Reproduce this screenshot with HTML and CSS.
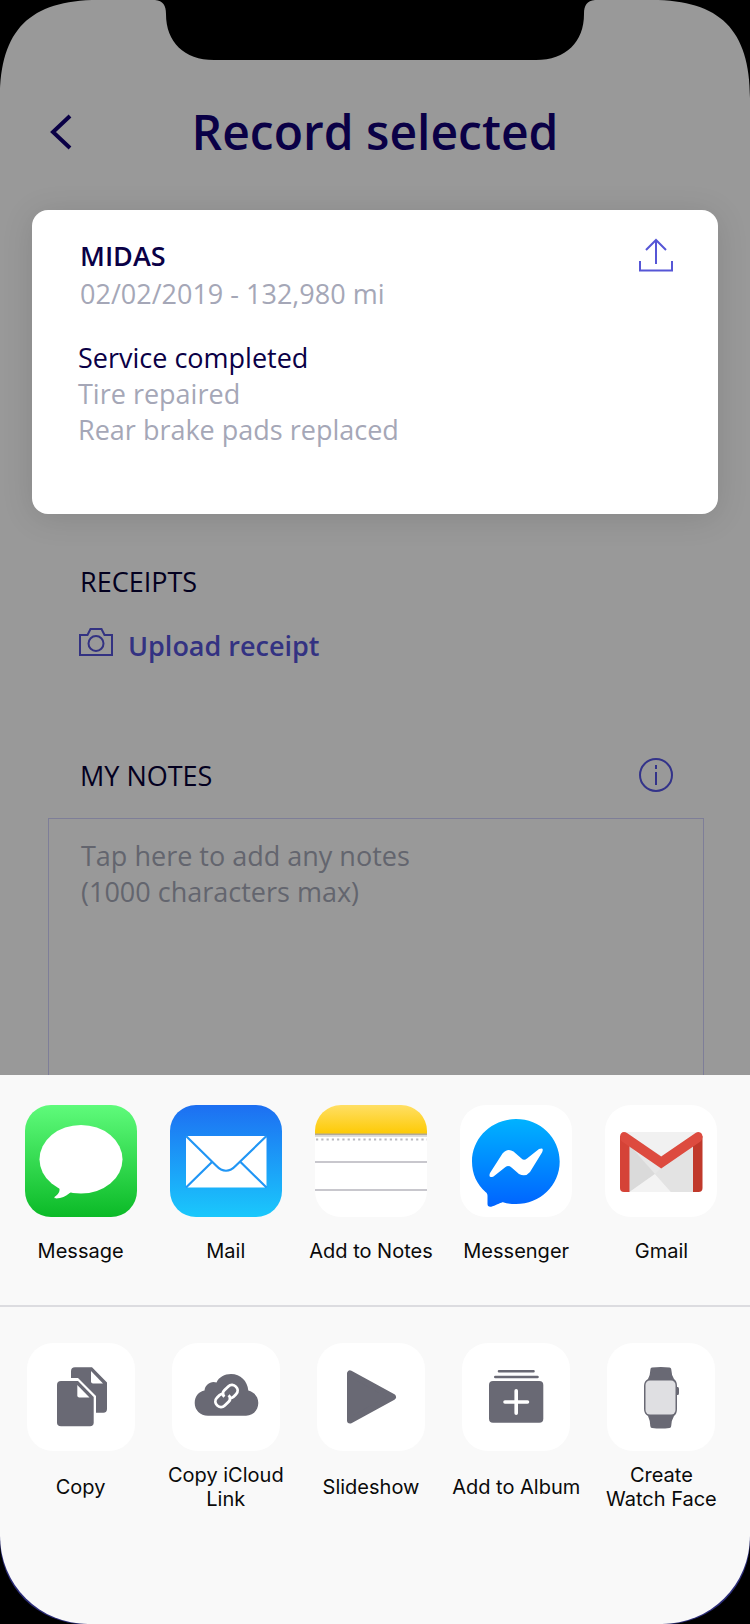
FILE: index.html
```html
<!DOCTYPE html>
<html lang="en">
<head>
<meta charset="utf-8">
<meta name="viewport" content="width=device-width, initial-scale=1">
<title>Record selected</title>
<link rel="stylesheet" href="styles.css">
</head>
<body>
<div class="screen">
  <svg class="corner corner-left" viewBox="0 0 98 98" aria-hidden="true"><path d="M0 0V98C0 30 30 0 98 0Z"/></svg>
  <svg class="corner corner-right" viewBox="0 0 98 98" aria-hidden="true"><path d="M98 0V98C98 30 68 0 0 0Z"/></svg>
  <svg class="notch" viewBox="0 0 440 60" aria-hidden="true"><path d="M0 0C8 1 11 5 11 14C11 42 29 60 59 60H381C411 60 429 42 429 14C429 5 432 1 440 0Z"/></svg>

  <header class="header">
    <button class="icon-button back" type="button" aria-label="Back">
      <svg width="22" height="36" viewBox="0 0 22 36"><path d="M20 2L3 18L20 34" fill="none" stroke="currentColor" stroke-width="4"/></svg>
    </button>
    <h1 class="title">Record selected</h1>
  </header>

  <main class="content">
    <section class="card">
      <div class="card-head">
        <h2 class="shop">MIDAS</h2>
        <button class="icon-button share" type="button" aria-label="Share record">
          <svg width="34" height="34" viewBox="0 0 34 34"><g fill="none" stroke="currentColor" stroke-width="2"><path d="M1 23V32.500H33V23"/><path d="M17 26V2M7 12L17 2L27 12"/></g></svg>
        </button>
      </div>
      <p class="muted date">02/02/2019 - 132,980 mi</p>
      <div class="service">
        <h3 class="service-title">Service completed</h3>
        <p class="muted">Tire repaired</p>
        <p class="muted">Rear brake pads replaced</p>
      </div>
    </section>

    <section class="receipts">
      <h2 class="section-title">RECEIPTS</h2>
      <button class="upload" type="button">
        <svg width="34" height="28" viewBox="0 0 34 28"><g fill="none" stroke="currentColor" stroke-width="2"><path d="M1 7H8.500L11.500 1H22.500L25.500 7H33V27H1Z"/><circle cx="17" cy="15.500" r="7.500"/></g></svg>
        <span>Upload receipt</span>
      </button>
    </section>

    <section class="notes">
      <div class="notes-head">
        <label class="section-title" for="notes">MY NOTES</label>
        <button class="icon-button info" type="button" aria-label="About notes">
          <svg width="34" height="34" viewBox="0 0 34 34"><circle cx="17" cy="17" r="16" fill="none" stroke="currentColor" stroke-width="2"/><path d="M17 7V11M17 14V27" fill="none" stroke="currentColor" stroke-width="2"/></svg>
        </button>
      </div>
      <textarea class="notes-box" id="notes" maxlength="1000" placeholder="Tap here to add any notes&#10;(1000 characters max)"></textarea>
    </section>
  </main>

  <div class="sheet" role="dialog" aria-label="Share">
    <div class="row apps">
      <button class="item" type="button">
        <svg class="app-icon" viewBox="0 0 112 112"><defs><linearGradient id="gm" x1="0" y1="0" x2="0" y2="1"><stop offset="0" stop-color="#5ffb7b"/><stop offset="1" stop-color="#0bba27"/></linearGradient></defs><rect width="112" height="112" fill="url(#gm)"/><ellipse cx="56" cy="54.300" rx="41.500" ry="34.300" fill="#fff"/><path d="M32 80C37 84 34 89 29.500 92C29 94 32 93.500 35 93C40 92 43 89 46 87Z" fill="#fff"/></svg>
        <span class="label">Message</span>
      </button>
      <button class="item" type="button">
        <svg class="app-icon" viewBox="0 0 112 112"><defs><linearGradient id="gl" x1="0" y1="0" x2="0" y2="1"><stop offset="0" stop-color="#1d6ff2"/><stop offset="1" stop-color="#1ac8fc"/></linearGradient></defs><rect width="112" height="112" fill="url(#gl)"/><rect x="16" y="31" width="80.500" height="51.500" rx="2" fill="#fff"/><g fill="none" stroke="#2196f5" stroke-width="2.200"><path d="M16 31L46 60.500Q56 71 66 60.500L96.500 31"/><path d="M16 82.500L42 57M96.500 82.500L70.500 57"/></g></svg>
        <span class="label">Mail</span>
      </button>
      <button class="item" type="button">
        <svg class="app-icon" viewBox="0 0 112 112"><defs><linearGradient id="gn" x1="0" y1="0" x2="0" y2="1"><stop offset="0" stop-color="#ffdf65"/><stop offset="1" stop-color="#fdca04"/></linearGradient></defs><rect width="112" height="112" fill="#fff"/><rect width="112" height="29" fill="url(#gn)"/><rect y="28.500" width="112" height="2" fill="#b2aa98"/><rect y="30.500" width="112" height="1.500" fill="#dedede"/><path d="M1 34.500H112" stroke="#b9b9bf" stroke-width="2.200" stroke-dasharray="2.200 3.070"/><path d="M0 57H112M0 85H112" stroke="#c8c7cd" stroke-width="2"/></svg>
        <span class="label">Add to Notes</span>
      </button>
      <button class="item" type="button">
        <svg class="app-icon" viewBox="0 0 112 112"><defs><linearGradient id="gf" gradientUnits="userSpaceOnUse" x1="0" y1="14" x2="0" y2="101"><stop offset="0" stop-color="#00b2ff"/><stop offset="1" stop-color="#0064ff"/></linearGradient></defs><rect width="112" height="112" fill="#fff"/><path d="M56 14C80 14 99.700 32.500 99.700 56.500C99.700 80.500 80 99 56 99C51 99 47 98.500 43 97.200C41.500 97.200 37 99.500 32.500 101.300C29.500 102.500 27.500 101.500 27.500 99V91C27.500 89 27 88 25.500 87C17 79.500 12 69 12 56.500C12 32.500 32 14 56 14Z" fill="url(#gf)"/><path d="M30 68L42.500 48.500Q47.500 42.500 53.500 46.500L61.500 53.500Q64 56 67 53.500L79 44Q84.500 42 82 47.500L70 67Q65.500 72.500 59 69L51.500 62.500Q48.500 60 45.500 62L33.500 71.500Q28 73.500 30 68Z" fill="#fff"/></svg>
        <span class="label">Messenger</span>
      </button>
      <button class="item" type="button">
        <svg class="app-icon" viewBox="0 0 112 112"><rect width="112" height="112" fill="#fff"/><path d="M20 27H93V87H20Z" fill="#e7e7e7"/><path d="M20 27H93L56.500 51Z" fill="#f1f1f1"/><path d="M24.500 40L50 69L24.500 87Z" fill="#dadada"/><path d="M24.500 87L50 69L66 87Z" fill="#f3f3f3"/><path d="M50 69L56 63L88 42V87H66Z" fill="#e3e3e3"/><path d="M15 31V83Q15 87 19 87H24.500V35Z" fill="#d54337"/><path d="M97.500 31V83Q97.500 87 93.500 87H88V35Z" fill="#c0392b"/><path d="M15 31.500Q15.500 27 19 27Q20.500 27 22 28L56.200 51.500L90.500 28Q92 27 93.500 27Q97.500 27.500 97.500 32Q97 35 95.500 36.500L56.200 63.500L17 36.500Q15.500 35 15 31.500Z" fill="#dd4b3f"/></svg>
        <span class="label">Gmail</span>
      </button>
    </div>

    <div class="row actions">
      <button class="item" type="button">
        <svg class="action-icon" viewBox="0 0 108 108"><path d="M48 24.300H65L80 39.500V66Q80 69.700 76.300 69.700H69V53L51 35H44V28.300Q44 24.300 48 24.300Z" fill="currentColor"/><path d="M64 28V38.500Q64 40.500 66 40.500H76Z" fill="#fff"/><path d="M34 38H51L66.700 54V79.500Q66.700 83.300 63 83.300H34Q30 83.300 30 79.500V42Q30 38 34 38Z" fill="currentColor"/><path d="M50.300 42V52.500Q50.300 54.500 52.300 54.500H62.500Z" fill="#fff"/></svg>
        <span class="label">Copy</span>
      </button>
      <button class="item" type="button">
        <svg class="action-icon" viewBox="0 0 108 108"><path d="M36 72.700C28 72.700 22.700 67 22.700 60C22.700 53 27 48.500 32.500 47.500C33 41.500 39 37.500 44.500 39.500C47 34 52.500 31 59 31C68.500 31 75.500 38 76.300 47.500C82 49 86.300 53.500 86.300 60C86.300 67 81 72.700 74 72.700Z" fill="currentColor"/><g transform="translate(54.500 53) rotate(45)" fill="none" stroke="#fff" stroke-width="2.800" stroke-linecap="round"><path d="M-1.500 2H-1C-4 2 -5.500 0 -5.500 -2.500V-8C-5.500 -15 5.500 -15 5.500 -8V-4.500C5.500 -3 5 -2 4 -1"/><path d="M1.500 -2H1C4 -2 5.500 0 5.500 2.500V8C5.500 15 -5.500 15 -5.500 8V4.500C-5.500 3 -5 2 -4 1"/></g></svg>
        <span class="label">Copy iCloud Link</span>
      </button>
      <button class="item" type="button">
        <svg class="action-icon" viewBox="0 0 108 108"><path d="M33 30.500V77.500L76 54Z" fill="currentColor" stroke="currentColor" stroke-width="6" stroke-linejoin="round"/></svg>
        <span class="label">Slideshow</span>
      </button>
      <button class="item" type="button">
        <svg class="action-icon" viewBox="0 0 108 108"><rect x="27" y="38" width="54.300" height="41.700" rx="4" fill="currentColor"/><path d="M37 28.300H71.500M33.300 34H75.500" stroke="currentColor" stroke-width="2.600" stroke-linecap="round"/><path d="M54.200 47.700V70.300M43 59H65.500" stroke="#fff" stroke-width="3.600" stroke-linecap="round"/></svg>
        <span class="label">Add to Album</span>
      </button>
      <button class="item" type="button">
        <svg class="action-icon" viewBox="0 0 108 108"><path d="M43.500 26Q43.500 24.500 45 24.500Q54 23.500 62.500 24.500Q64 24.500 64.200 26Q64.500 32 67 36Q70 38 70 43V44H71Q72 44.500 72 46V50Q72 52 71 52H70V66Q70 71 67 73Q64.500 77 64.200 83Q64 85 62.500 85Q54 86 45 85Q43.500 85 43.300 83Q43 77 41 73Q37 71 37 66V43Q37 38 41 36Q43.200 32 43.500 26Z" fill="currentColor"/><rect x="38.500" y="37.500" width="30" height="34" rx="4.500" fill="#dfdfe2"/></svg>
        <span class="label">Create Watch&nbsp;Face</span>
      </button>
    </div>
  </div>
</div>
</body>
</html>
```

FILE: styles.css
```css
* { box-sizing: border-box; }

body {
  margin: 0;
  background: #000;
  font-family: "Open Sans", "Noto Sans", sans-serif;
  font-size: 27px;
  line-height: 36px;
  color: #0a0046;
}

h1, h2, h3, p { margin: 0; font: inherit; }

button {
  margin: 0;
  padding: 0;
  border: 0;
  background: none;
  color: inherit;
  font: inherit;
  cursor: pointer;
}

svg { display: block; }

.screen {
  position: relative;
  display: flex;
  flex-direction: column;
  min-height: 100vh;
  overflow: hidden;
  border-radius: 0 0 84px 84px;
  background: linear-gradient(#999 0 75%, #2b2c78 75%);
}

.corner {
  position: absolute;
  top: 0;
  width: 98px;
  height: 98px;
}
.corner-left { left: 0; }
.corner-right { right: 0; }

.notch {
  position: absolute;
  top: 0;
  left: 50%;
  width: 440px;
  height: 60px;
  transform: translateX(-50%);
}

.header {
  display: grid;
  grid-template-columns: 48px 1fr 48px;
  align-items: center;
  padding: 100px 48px 46px;
}
.back { justify-self: start; padding-left: 2px; }
.title {
  font-size: 48px;
  font-weight: 600;
  line-height: 64px;
  text-align: center;
}

.content {
  display: flex;
  flex: 1;
  flex-direction: column;
}

.card {
  margin: 0 32px;
  padding: 28px 45px 66px 46px;
  border-radius: 16px;
  background: #fff;
  box-shadow: 0 4px 32px rgba(0, 0, 0, 0.12);
}
.card-head,
.notes-head {
  display: flex;
  align-items: flex-start;
  justify-content: space-between;
}
.shop { padding-left: 2px; font-weight: 600; }
.share, .info { color: #5656d6; }
.muted { color: #a5a7b7; }
.date { padding: 2px 0 28px 2px; }

.receipts { padding: 50px 77px 0 79px; }
.section-title { padding-left: 1px; color: #03001f; }
.upload {
  display: flex;
  align-items: flex-start;
  gap: 15px;
  margin-top: 28px;
  color: #333282;
  font-weight: 600;
}

.notes {
  display: flex;
  flex: 1;
  flex-direction: column;
  padding: 94px 46px 0 48px;
}
.notes-head { padding: 0 31px; }
.info { color: #33338a; }
.notes-box {
  flex: 1;
  width: 100%;
  min-height: 160px;
  margin-top: 24px;
  padding: 19px 32px;
  border: 1px solid #7e7e98;
  border-bottom: 0;
  border-radius: 0;
  outline: 0;
  background: none;
  color: #03001f;
  font: inherit;
  resize: none;
}
.notes-box::placeholder { color: #63656e; opacity: 1; }

.sheet {
  border-radius: 0 0 88px 88px;
  background: #f9f9f9;
  color: #0a0a0a;
  font-family: Inter, "Liberation Sans", sans-serif;
  font-size: 20px;
  line-height: 24px;
}
.row {
  display: grid;
  grid-template-columns: repeat(5, 1fr);
  padding: 30px 16px 30px 8px;
}
.apps { border-bottom: 2px solid #dcdce0; }
.actions { padding-top: 36px; padding-bottom: 113px; }
.item {
  display: flex;
  flex-direction: column;
  align-items: center;
  gap: 10px;
}
.actions .item { gap: 12px; }
.app-icon { width: 112px; height: 112px; border-radius: 26px; }
.action-icon {
  width: 108px;
  height: 108px;
  border-radius: 26px;
  background: #fff;
  color: #696974;
}
.label {
  display: flex;
  align-items: center;
  max-width: 136px;
  min-height: 48px;
  text-align: center;
}
```
